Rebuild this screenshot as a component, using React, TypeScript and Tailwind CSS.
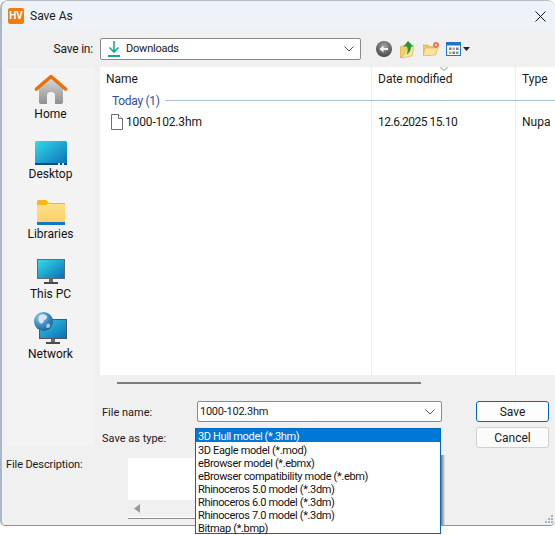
import React from 'react';

const types = [
  '3D Hull model (*.3hm)',
  '3D Eagle model (*.mod)',
  'eBrowser model (*.ebmx)',
  'eBrowser compatibility mode (*.ebm)',
  'Rhinoceros 5.0 model (*.3dm)',
  'Rhinoceros 6.0 model (*.3dm)',
  'Rhinoceros 7.0 model (*.3dm)',
  'Bitmap (*.bmp)',
];

function Chevron() {
  return (
    <svg width="10" height="6" viewBox="0 0 10 6" fill="none" stroke="#555" strokeWidth="1">
      <path d="M0.5 0.5 L5 5 L9.5 0.5" />
    </svg>
  );
}

function HomeIcon() {
  return (
    <svg width="34" height="31" viewBox="0 0 34 31">
      <defs>
        <linearGradient id="hb" x1="0" y1="0" x2="0" y2="1">
          <stop offset="0" stopColor="#dcdcdc" />
          <stop offset="1" stopColor="#8e8e8e" />
        </linearGradient>
      </defs>
      <path d="M5 14 L17 3 L29 14 V28 Q29 30 27 30 H21 V21 Q21 18 17 18 Q13 18 13 21 V30 H7 Q5 30 5 28 Z" fill="url(#hb)" />
      <path d="M2.5 15 L17 2.5 L31.5 15" fill="none" stroke="#e8710a" strokeWidth="3.6" strokeLinecap="round" strokeLinejoin="round" />
    </svg>
  );
}

function DesktopIcon() {
  return (
    <svg width="32" height="24" viewBox="0 0 32 24">
      <defs>
        <linearGradient id="db" x1="0" y1="0" x2="1" y2="1">
          <stop offset="0" stopColor="#35dbe8" />
          <stop offset="1" stopColor="#0a6fb8" />
        </linearGradient>
      </defs>
      <rect x="0" y="0" width="32" height="24" rx="1.5" fill="url(#db)" />
      <rect x="0" y="22" width="32" height="2" fill="#0b4a78" />
      <rect x="23" y="22" width="2" height="2" fill="#cfe6f2" />
      <rect x="27" y="22" width="2" height="2" fill="#cfe6f2" />
    </svg>
  );
}

function FolderIcon() {
  return (
    <svg width="28" height="25" viewBox="0 0 28 25">
      <defs>
        <linearGradient id="fb" x1="0" y1="0" x2="0" y2="1">
          <stop offset="0" stopColor="#fde08a" />
          <stop offset="1" stopColor="#ffd066" />
        </linearGradient>
      </defs>
      <rect x="0" y="3" width="28" height="20" fill="url(#fb)" />
      <path d="M0 1.5 Q0 0 1.5 0 H9 L12 3 L9 5 H0 Z" fill="#f9b61a" />
      <rect x="12" y="3" width="16" height="1" fill="#f9b61a" />
      <rect x="0" y="22" width="28" height="3" fill="#0f78c8" />
    </svg>
  );
}

function MonitorIcon() {
  return (
    <svg width="28" height="26" viewBox="0 0 28 26">
      <defs>
        <linearGradient id="mb" x1="0" y1="0" x2="1" y2="1">
          <stop offset="0" stopColor="#35dbe8" />
          <stop offset="1" stopColor="#0a6fb8" />
        </linearGradient>
      </defs>
      <rect x="0" y="0" width="28" height="20" fill="#5f6b73" />
      <rect x="1" y="1" width="26" height="18" fill="url(#mb)" />
      <rect x="12" y="20" width="4" height="3" fill="#6b6b6b" />
      <rect x="7" y="23" width="14" height="2" fill="#4a4a4a" />
    </svg>
  );
}

function NetworkIcon() {
  return (
    <svg width="33" height="33" viewBox="0 0 33 33">
      <defs>
        <linearGradient id="nb" x1="0" y1="0" x2="1" y2="1">
          <stop offset="0" stopColor="#35c6e0" />
          <stop offset="1" stopColor="#0a6fb8" />
        </linearGradient>
        <radialGradient id="ng" cx="0.35" cy="0.3" r="0.8">
          <stop offset="0" stopColor="#a9d0ea" />
          <stop offset="0.5" stopColor="#3f8fc4" />
          <stop offset="1" stopColor="#14598e" />
        </radialGradient>
      </defs>
      <rect x="5" y="7" width="28" height="20" fill="#4d5860" />
      <rect x="6" y="8" width="26" height="18" fill="url(#nb)" />
      <rect x="17" y="27" width="4" height="3" fill="#6b6b6b" />
      <rect x="12" y="30" width="14" height="2" fill="#4a4a4a" />
      <circle cx="9.5" cy="9.5" r="9.5" fill="url(#ng)" />
      <path d="M6 3 Q10 1 13 4 Q14 7 10 8 Q9 13 6 11 Q3 7 6 3 Z" fill="#e6f0f7" opacity="0.85" />
      <path d="M13 12 Q17 11 16 15 Q13 17 12 15 Z" fill="#e6f0f7" opacity="0.7" />
    </svg>
  );
}

function DownloadIcon() {
  return (
    <svg width="12" height="16" viewBox="0 0 12 16" fill="none" stroke="#18a88f" strokeWidth="1.6">
      <path d="M6 0 V10.5 M1.5 6.5 L6 11 L10.5 6.5" />
      <path d="M0 15 H12" strokeWidth="1.8" />
    </svg>
  );
}

function FileIcon() {
  return (
    <svg width="14" height="16" viewBox="0 0 14 16" fill="#fff" stroke="#6f6f6f" strokeWidth="1">
      <path d="M1.5 0.5 H8.5 L12.5 4.5 V15.5 H1.5 Z" />
      <path d="M8.5 0.5 V4.5 H12.5" />
    </svg>
  );
}

function BackIcon() {
  return (
    <svg width="16" height="16" viewBox="0 0 16 16">
      <defs>
        <radialGradient id="bk" cx="0.5" cy="0.35" r="0.7">
          <stop offset="0" stopColor="#a8a8a8" />
          <stop offset="1" stopColor="#3d3d3d" />
        </radialGradient>
      </defs>
      <circle cx="8" cy="8" r="8" fill="url(#bk)" />
      <path d="M3.5 8 L7.5 4.5 V7 H12 V9 H7.5 V11.5 Z" fill="#f2f2f2" />
    </svg>
  );
}

function UpIcon() {
  return (
    <svg width="14" height="17" viewBox="0 0 14 17">
      <path d="M0 6 L8 3 V14 L0 17 Z" fill="#f3cf6b" stroke="#c99a30" strokeWidth="0.6" />
      <path d="M8 5 H14 L12 15 L2 17 Z" fill="#fbe39a" stroke="#d1a63e" strokeWidth="0.5" />
      <path d="M8 0 L13.5 5.5 H11 Q11 11 6.5 14 Q8.5 9 7 5.5 H3.5 Z" fill="#1f9a3a" />
    </svg>
  );
}

function NewFolderIcon() {
  return (
    <svg width="16" height="14" viewBox="0 0 16 14">
      <path d="M0 3 H5 L6 4.5 H13 V12 L0 14 Z" fill="#f0c965" stroke="#c99a30" strokeWidth="0.5" />
      <path d="M2 6 H15 L12.5 13 L0 14 Z" fill="#fbe39a" stroke="#d1a63e" strokeWidth="0.5" />
      <circle cx="13" cy="3" r="3" fill="#f0754a" />
      <circle cx="13" cy="3" r="1.2" fill="#ffd9c7" />
    </svg>
  );
}

function ViewsIcon() {
  return (
    <svg width="24" height="14" viewBox="0 0 24 14">
      <rect x="0.5" y="0.5" width="14" height="13" fill="#fff" stroke="#1f74d0" />
      <rect x="0.5" y="0.5" width="14" height="3" fill="#1f74d0" />
      <rect x="3" y="5.5" width="2.5" height="2.5" fill="#4e86b8" />
      <rect x="6.5" y="5.5" width="2.5" height="2.5" fill="#e2a24a" />
      <rect x="10" y="5.5" width="2.5" height="2.5" fill="#4e86b8" />
      <rect x="3" y="9.5" width="2.5" height="2.5" fill="#e2a24a" />
      <rect x="6.5" y="9.5" width="2.5" height="2.5" fill="#4e86b8" />
      <rect x="10" y="9.5" width="2.5" height="2.5" fill="#5fae6c" />
      <path d="M17 5 H24 L20.5 9 Z" fill="#222" />
    </svg>
  );
}

function NavItem({ icon, label }: { icon: React.ReactNode; label: string }) {
  return (
    <div className="flex h-[60px] flex-col items-center">
      <div className="flex h-[33px] items-end justify-center">{icon}</div>
      <span className="mt-[1px] leading-[16px] text-[#111]">{label}</span>
    </div>
  );
}

export default function App() {
  return (
    <div
      className="relative h-[535px] w-[555px] overflow-hidden bg-white text-[12px] text-[#1a1a1a]"
      style={{ fontFamily: 'Roboto, "Noto Sans", sans-serif' }}
    >
      <div className="relative flex h-[526px] flex-col overflow-hidden rounded-t-[8px] rounded-b-[5px] border-t border-l-2 border-t-[#b9bec4] border-l-[#a7b8ca] border-b border-b-[#7f98b2] bg-[#f0f0f0]">
        {/* title bar */}
        <div className="flex h-[30px] shrink-0 items-center justify-between bg-[#eef3fa] pl-[6px] pr-[8px]">
          <div className="flex items-center gap-[6px]">
            <div className="flex h-[16px] w-[16px] items-center justify-center rounded-[2px] bg-[#ee7d0c] text-[10px] leading-none font-bold text-white">
              HV
            </div>
            <span className="text-[#1a1a1a]">Save As</span>
          </div>
          <svg width="11" height="11" viewBox="0 0 11 11" stroke="#111" strokeWidth="1" className="mr-[1px]">
            <path d="M0.5 0.5 L10.5 10.5 M10.5 0.5 L0.5 10.5" />
          </svg>
        </div>

        {/* save in */}
        <div className="flex h-[36px] shrink-0 items-center">
          <div className="w-[91px] text-right tracking-[-0.2px]">Save in:</div>
          <div className="ml-[7px] flex h-[22px] w-[261px] items-center justify-between rounded-[2px] border border-[#8a8a8a] bg-white pl-[7px] pr-[6px] text-[11px] tracking-[-0.2px]">
            <div className="flex items-center gap-[6px]">
              <DownloadIcon />
              <span>Downloads</span>
            </div>
            <Chevron />
          </div>
          <div className="ml-[15px] flex items-center">
            <BackIcon />
            <div className="ml-[8px]">
              <UpIcon />
            </div>
            <div className="ml-[9px]">
              <NewFolderIcon />
            </div>
            <div className="ml-[7px]">
              <ViewsIcon />
            </div>
          </div>
        </div>

        {/* middle */}
        <div className="flex h-[379px] shrink-0">
          <div className="ml-[5px] flex w-[87px] shrink-0 flex-col bg-[#f3f3f3] pt-[5px]">
            <NavItem icon={<HomeIcon />} label="Home" />
            <NavItem icon={<DesktopIcon />} label="Desktop" />
            <NavItem icon={<FolderIcon />} label="Libraries" />
            <NavItem icon={<MonitorIcon />} label="This PC" />
            <NavItem icon={<NetworkIcon />} label="Network" />
          </div>

          <div className="ml-[6px] flex min-w-0 flex-1 flex-col">
            {/* file list */}
            <div className="relative h-[308px] shrink-0 overflow-hidden bg-white">
              <div className="absolute left-[271px] top-0 h-full w-px bg-[#eeeeee]" />
              <div className="absolute left-[415px] top-0 h-full w-px bg-[#eeeeee]" />
              <svg width="8" height="4" viewBox="0 0 8 4" fill="none" stroke="#888" className="absolute left-[340px] top-0">
                <path d="M0.5 0 L4 3.5 L7.5 0" />
              </svg>
              <div className="flex h-[23px] items-center">
                <div className="w-[272px] pl-[6px] pt-[1px]">Name</div>
                <div className="w-[144px] pl-[6px] pt-[1px]">Date modified</div>
                <div className="pl-[6px] pt-[1px]">Type</div>
              </div>
              <div className="relative flex h-[21px] items-center pl-[12px] text-[#2f4f92]">
                <span className="tracking-[-0.3px]">Today (1)</span>
                <div className="ml-[5px] h-px flex-1 bg-[#a9bcd8]" />
              </div>
              <div className="relative flex h-[19px] items-center pt-[2px]">
                <div className="flex w-[272px] items-center pl-[10px]">
                  <FileIcon />
                  <span className="ml-[2px] tracking-[-0.15px]">1000-102.3hm</span>
                </div>
                <div className="w-[144px] pl-[6px] tracking-[-0.5px]">12.6.2025 15.10</div>
                <div className="pl-[6px]">Nupa</div>
              </div>
            </div>

            {/* horizontal scrollbar */}
            <div className="flex h-[15px] shrink-0 items-center">
              <div className="ml-[17px] h-[2px] w-[304px] bg-[#7d7d7d]" />
            </div>

            {/* form */}
            <div className="flex-1 text-[11px]">
              <div className="mt-[11px] flex h-[21px] items-center">
                <div className="w-[97px] pl-[2px] pt-[3px]">File name:</div>
                <div className="flex h-[21px] w-[245px] items-center justify-between rounded-[2px] border border-[#8a8a8a] bg-white pl-[2px] pr-[6px]">
                  <span className="pt-[1px] tracking-[-0.25px]">1000-102.3hm</span>
                  <Chevron />
                </div>
                <div className="ml-[34px] flex h-[21px] w-[73px] items-center justify-center rounded-[3px] border border-[#0067c0] bg-[#fdfdfd] text-[12px]">
                  Save
                </div>
              </div>
              <div className="mt-[5px] flex h-[21px] items-center">
                <div className="w-[97px] pl-[2px] pt-[3px]">Save as type:</div>
                <div className="w-[245px]" />
                <div className="ml-[34px] flex h-[21px] w-[73px] items-center justify-center rounded-[3px] border border-[#d0d0d0] bg-[#fbfbfb] text-[12px]">
                  Cancel
                </div>
              </div>
            </div>
          </div>
        </div>

        {/* description */}
        <div className="flex flex-1 text-[11px]">
          <div className="w-[126px] shrink-0 pl-[4px] pt-[11px] tracking-[-0.1px]">File Description:</div>
          <div className="mt-[12px] flex h-[61px] w-[316px] flex-col border-b border-[#8a8a8a] bg-white">
            <div className="flex-1" />
            <div className="flex h-[17px] items-center bg-[#f0f0f0] pl-[6px]">
              <svg width="6" height="9" viewBox="0 0 6 9">
                <path d="M6 0 V9 L0 4.5 Z" fill="#9a9a9a" />
              </svg>
            </div>
            <div className="h-px bg-white" />
          </div>
        </div>

        {/* resize grip */}
        <svg width="8" height="8" viewBox="0 0 8 8" fill="#b0b0b0" className="absolute right-[2px] bottom-[2px]">
          <rect x="6" y="0" width="2" height="2" />
          <rect x="3" y="3" width="2" height="2" />
          <rect x="6" y="3" width="2" height="2" />
          <rect x="0" y="6" width="2" height="2" />
          <rect x="3" y="6" width="2" height="2" />
          <rect x="6" y="6" width="2" height="2" />
        </svg>
      </div>

      {/* open type dropdown */}
      <div className="absolute left-[195px] top-[428px] w-[246px] border border-[#0067c0] bg-white text-[11px] tracking-[-0.35px]">
        {types.map((t, i) => (
          <div key={t} className={`h-[13px] pl-[2px] ${i === 0 ? 'bg-[#0078d7] leading-[15px] text-white' : 'leading-[17px] text-[#111]'}`}>
            {t}
          </div>
        ))}
      </div>
      {/* drop shadow of the list on the right */}
      <div className="absolute left-[441px] top-[455px] h-[70px] w-[4px] bg-gradient-to-r from-[#777777] to-[#e6e6e6]" />
    </div>
  );
}
